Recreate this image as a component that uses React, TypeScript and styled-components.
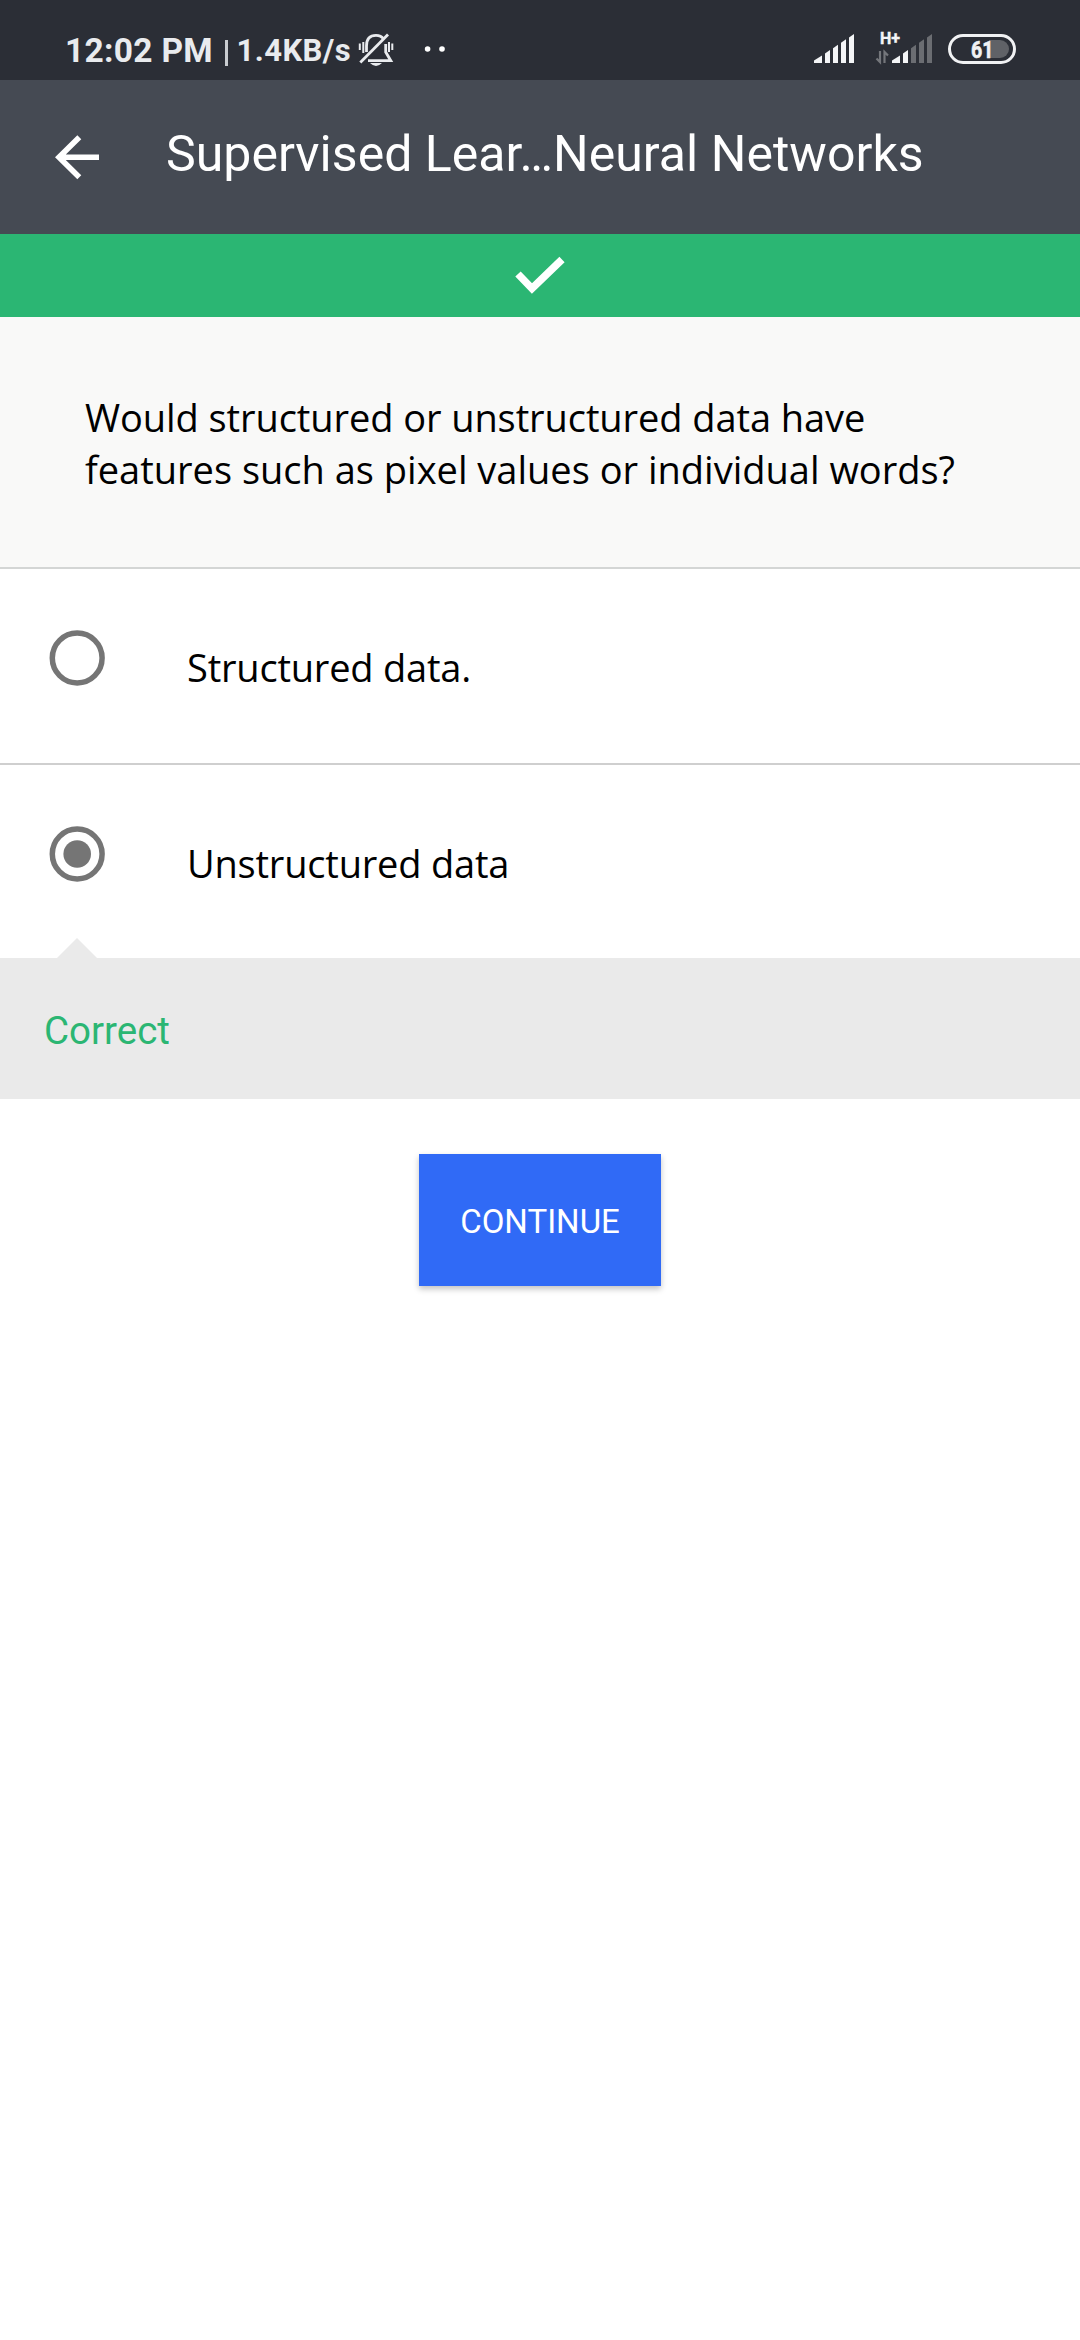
import React from "react";
import styled, { createGlobalStyle } from "styled-components";

const GlobalStyle = createGlobalStyle`
  * { box-sizing: border-box; }
  body { margin: 0; background: #fff; font-family: Roboto, "Liberation Sans", sans-serif; }
`;

const Screen = styled.div`
  width: 1080px;
  min-height: 2340px;
  background: #fff;
  display: flex;
  flex-direction: column;
`;

const StatusBar = styled.div`
  height: 80px;
  background: #2b2e36;
  display: flex;
  justify-content: space-between;
  padding: 0 64px 0 65px;
  color: #e9ebee;
`;

const StatusGroup = styled.div`
  display: flex;
  align-items: flex-start;
`;

const StatusText = styled.span<{ $size: number; $width: number; $spacing?: number }>`
  width: ${(p) => p.$width}px;
  font-size: ${(p) => p.$size}px;
  line-height: 40px;
  padding-top: 31px;
  font-weight: 700;
  letter-spacing: ${(p) => p.$spacing ?? 0}px;
  white-space: nowrap;
`;

const Separator = styled.span`
  width: 3px;
  height: 26px;
  margin: 40px 9px 0 0;
  background: #c9ccd0;
`;

const StatusIcon = styled.svg`
  display: block;
  height: 80px;
  flex: none;
`;

const AppBar = styled.header`
  height: 154px;
  background: #454a53;
  display: flex;
  align-items: flex-start;
  padding: 55px 0 0 55px;
`;

const BackIcon = styled.svg`
  width: 45px;
  height: 45px;
  display: block;
`;

const Title = styled.h1`
  margin: -11px 0 0 66px;
  font-size: 50px;
  line-height: 60px;
  font-weight: 400;
  letter-spacing: 0.03px;
  color: #fff;
  white-space: nowrap;
`;

const ResultBar = styled.div`
  height: 83px;
  background: #2bb673;
  display: flex;
  justify-content: center;
  padding-top: 22px;
`;

const Question = styled.section`
  height: 252px;
  background: #f9f9f8;
  border-bottom: 2px solid #d4d6d5;
  padding: 74px 85px 0;
`;

const BodyText = styled.p<{ $spacing?: number }>`
  margin: 0;
  font-family: "Open Sans", "Noto Sans", sans-serif;
  font-size: 38px;
  font-weight: 400;
  line-height: 52px;
  letter-spacing: ${(p) => p.$spacing ?? 0}px;
  white-space: nowrap;
  color: #000;
`;

const Option = styled.div<{ $divider?: boolean }>`
  height: ${(p) => (p.$divider ? 196 : 193)}px;
  border-bottom: ${(p) => (p.$divider ? "2px solid #cfcfcf" : "none")};
  display: flex;
  align-items: flex-start;
  padding: 61px 0 0 49px;
`;

const RadioIcon = styled.svg`
  width: 56px;
  height: 56px;
  margin-right: 82px;
`;

const OptionText = styled(BodyText)`
  margin-top: 11px;
`;

const Feedback = styled.div`
  position: relative;
  height: 141px;
  background: #eaeaea;
  padding: 48px 44px 0;
  font-size: 38.5px;
  line-height: 50px;
  color: #2bb673;
`;

const Pointer = styled.svg`
  position: absolute;
  left: 57px;
  top: -20px;
`;

const ContinueButton = styled.button`
  align-self: center;
  margin-top: 55px;
  width: 242px;
  height: 132px;
  border: 0;
  padding: 4px 0 0;
  background: #306af6;
  color: #fff;
  font: 400 33px/40px Roboto, "Liberation Sans", sans-serif;
  box-shadow: 0 3px 6px rgba(0, 0, 0, 0.24);
`;

const bars = [0, 1, 2, 3, 4];

function Signal({ x, lit }: { x: number; lit: number }) {
  return (
    <>
      {bars.map((i) => {
        const left = x + (i === 0 ? 0 : 3 + i * 8);
        const right = x + 8 + i * 8;
        const top = 56.5 - i * 5.4;
        return (
          <path
            key={i}
            d={`M${left} 63V${top + (i === 0 ? 4 : 2.5)}L${right} ${top - 1}V63Z`}
            fill={i < lit ? "#f4f5f7" : "#6b6d72"}
          />
        );
      })}
    </>
  );
}

function Radio({ checked }: { checked?: boolean }) {
  return (
    <RadioIcon viewBox="0 0 56 56">
      <circle cx="28.2" cy="28" r="24.9" fill="none" stroke="#757575" strokeWidth="5.5" />
      {checked && <circle cx="28.2" cy="28" r="13.8" fill="#757575" />}
    </RadioIcon>
  );
}

export default function App() {
  return (
    <Screen>
      <GlobalStyle />
      <StatusBar>
        <StatusGroup>
          <StatusText $size={33.5} $width={159.5} $spacing={0.3}>12:02 PM</StatusText>
          <Separator />
          <StatusText $size={31} $width={116.5} $spacing={0.45}>1.4KB/s</StatusText>
          <StatusIcon width="100" viewBox="353 0 100 80">
            <g fill="none" stroke="#e9ebee" strokeWidth="2.8">
              <path d="M366.5 52V46C366.5 39 370 35.4 376 35.4C379.5 35.4 382 36.8 383.5 39M385.7 44V52L390.8 60.7H368" />
              <path d="M360.3 62.5L388 34.5" />
              <path d="M359.8 43.5V50M363.3 42V53M392.3 43.5V50M389 42V52" strokeWidth="2" />
            </g>
            <path d="M370 63H382Q376 69 370 63Z" fill="#e9ebee" />
            <circle cx="427.6" cy="49" r="2.8" fill="#fff" />
            <circle cx="442" cy="49" r="2.8" fill="#fff" />
          </StatusIcon>
        </StatusGroup>
        <StatusGroup>
          <StatusIcon width="206" viewBox="810 0 206 80">
            <Signal x={814} lit={5} />
            <text x="880" y="44" fontSize="16" fontWeight="700" fill="#f4f5f7" stroke="#f4f5f7" strokeWidth="0.4">H+</text>
            <path d="M880 51V62L876.5 58.5M884.5 63V52L888 55.5" fill="none" stroke="#74767b" strokeWidth="2.2" />
            <Signal x={892} lit={2} />
            <path d="M989 40H1000A9 9 0 0 1 1000 58H989Z" fill="#606267" />
            <rect x="949.5" y="35.5" width="65" height="27" rx="13.5" fill="none" stroke="#f1f2f4" strokeWidth="3" />
            <text x="971" y="58" fontSize="24.5" fontWeight="700" fill="#f1f2f4" stroke="#f1f2f4" strokeWidth="0.6" textLength="22.5" lengthAdjust="spacingAndGlyphs">61</text>
          </StatusIcon>
        </StatusGroup>
      </StatusBar>
      <AppBar>
        <BackIcon viewBox="0 0 45 45">
          <path d="M44 22.2H4M24.3 2.2L4 22.2L24.3 42.3" fill="none" stroke="#fff" strokeWidth="5.6" />
        </BackIcon>
        <Title>Supervised Lear…Neural Networks</Title>
      </AppBar>
      <ResultBar>
        <svg width="50" height="40" viewBox="0 0 50 40">
          <path d="M3 18L17 32.5L47 3.5" fill="none" stroke="#fff" strokeWidth="7.5" />
        </svg>
      </ResultBar>
      <Question>
        <BodyText $spacing={-0.08}>Would structured or unstructured data have</BodyText>
        <BodyText>features such as pixel values or individual words?</BodyText>
      </Question>
      <Option $divider>
        <Radio />
        <OptionText $spacing={-0.2}>Structured data.</OptionText>
      </Option>
      <Option>
        <Radio checked />
        <OptionText $spacing={-0.2}>Unstructured data</OptionText>
      </Option>
      <Feedback>
        <Pointer width="40" height="21" viewBox="0 0 40 21">
          <path d="M20 0L40 20V21H0V20Z" fill="#eaeaea" />
        </Pointer>
        Correct
      </Feedback>
      <ContinueButton>CONTINUE</ContinueButton>
    </Screen>
  );
}
